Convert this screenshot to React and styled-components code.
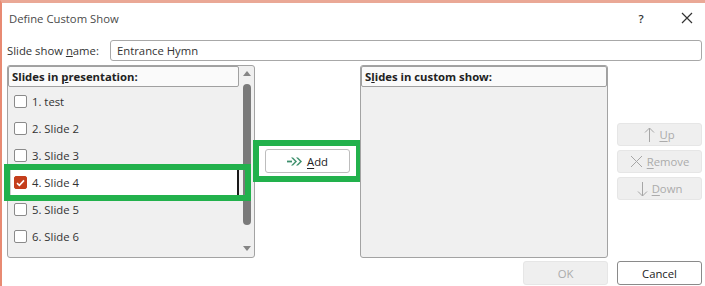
import styled, { createGlobalStyle } from "styled-components";

const GlobalStyle = createGlobalStyle`
  html, body {
    margin: 0;
    padding: 0;
    background: #ffffff;
  }
  body {
    font-family: "Open Sans", "Noto Sans", sans-serif;
    font-size: 11.3px;
    color: #333;
  }
`

const Dialog = styled.div`
  width: 705px;
  height: 286px;
  box-sizing: border-box;
  border-top: 3px solid #eaa896;
  border-left: 2px solid #e88a72;
  display: flex;
  flex-direction: column;
  overflow: hidden;
`

const TitleBar = styled.div`
  height: 30px;
  display: flex;
  align-items: center;
  padding-left: 7px;
  color: #4a4a4a;
`

const Title = styled.div`
  flex: 1;
`

const TitleIcon = styled.div`
  width: 20px;
  display: flex;
  justify-content: center;
  color: #333;
  font-weight: 600;
  margin-right: ${props => props.$gap}px;
`

const NameRow = styled.div`
  margin-top: 7px;
  height: 21px;
  display: flex;
  align-items: center;
  padding-left: 5px;
  padding-right: 3px;
`

const Label = styled.div`
  width: 103px;
  color: #333;
`

const NameInput = styled.div`
  flex: 1;
  height: 100%;
  box-sizing: border-box;
  border: 1px solid #a8a8a8;
  border-radius: 3px;
  display: flex;
  align-items: center;
  padding-left: 6px;
  color: #333;
`

const Main = styled.div`
  margin-top: 4px;
  height: 193px;
  display: flex;
  padding-left: 5px;
`

const ListBox = styled.div`
  position: relative;
  width: 248px;
  height: 100%;
  box-sizing: border-box;
  border: 1px solid #a3a3a3;
  border-radius: 3px;
  background: #f0f0f0;
  display: flex;
`

const ListContent = styled.div`
  flex: 1;
  display: flex;
  flex-direction: column;
  overflow: hidden;
`

const ListHeader = styled.div`
  height: 21px;
  box-sizing: border-box;
  border: 1px solid #a0a0a0;
  border-radius: 2px;
  background: #fafafa;
  display: flex;
  align-items: center;
  padding-left: 3px;
  font-weight: bold;
  color: #222;
  margin-right: ${props => props.$gap || 0}px;
`

const Items = styled.div`
  padding-top: 1px;
  display: flex;
  flex-direction: column;
`

const Item = styled.div`
  height: 27px;
  box-sizing: border-box;
  display: flex;
  align-items: center;
  gap: 5px;
  padding-left: 3px;
  margin: 0 1px 0 2px;
  color: #333;
  background: ${props => props.$selected ? "#ffffff" : "transparent"};
  border: 1px solid ${props => props.$selected ? "#d0d0d0" : "transparent"};
  border-right: ${props => props.$selected ? "2px solid #1a1a1a" : "1px solid transparent"};
`

const Check = styled.div`
  width: 13px;
  height: 13px;
  box-sizing: border-box;
  border-radius: 2px;
  border: 1px solid ${props => props.$checked ? "#c43e1c" : "#8a8a8a"};
  background: ${props => props.$checked ? "#c43e1c" : "#ffffff"};
  display: flex;
  align-items: center;
  justify-content: center;
`

const ScrollTrack = styled.div`
  width: 14px;
  display: flex;
  flex-direction: column;
  align-items: center;
  padding-top: 5px;
  padding-bottom: 6px;
`

const Arrow = styled.div`
  width: 0;
  height: 0;
  border-left: 4px solid transparent;
  border-right: 4px solid transparent;
  border-bottom: ${props => props.$down ? "none" : "5px solid #858585"};
  border-top: ${props => props.$down ? "5px solid #858585" : "none"};
`

const Thumb = styled.div`
  margin-top: 8px;
  width: 8px;
  height: 141px;
  border-radius: 4px;
  background: #7a7a7a;
`

const Spacer = styled.div`
  flex: 1;
`

const GreenFrame = styled.div`
  position: absolute;
  box-sizing: border-box;
  border: 6px solid #22b14c;
  pointer-events: none;
`

const Middle = styled.div`
  width: 105px;
  display: flex;
  justify-content: center;
  padding-top: 84px;
`

const AddWrap = styled.div`
  position: relative;
  height: 24px;
`

const Button = styled.div`
  width: 85px;
  height: ${props => props.$h || 23}px;
  box-sizing: border-box;
  border-radius: 3px;
  display: flex;
  align-items: center;
  justify-content: center;
  gap: 4px;
  color: ${props => props.$disabled ? "#ababab" : "#222"};
  background: ${props => props.$disabled ? "#efefef" : "#ffffff"};
  border: 1px solid ${props => props.$disabled ? "#e6e6e6" : props.$strong ? "#8a8a8a" : "#bdbdbd"};

  & u {
    text-underline-offset: 2px;
  }
`

const SideButtons = styled.div`
  margin-left: 9px;
  padding-top: 58px;
  display: flex;
  flex-direction: column;
  gap: 4px;
`

const Footer = styled.div`
  margin-top: 3px;
  display: flex;
  justify-content: flex-end;
  gap: 9px;
  padding-right: 3px;
`

const slides = ["1. test", "2. Slide 2", "3. Slide 3", "4. Slide 4", "5. Slide 5", "6. Slide 6"];

const CheckMark = () => (
  <svg width="9" height="8" viewBox="0 0 9 8">
    <path d="M1 4.2 L3.4 6.4 L8 1.4" fill="none" stroke="#fff" strokeWidth="1.6" />
  </svg>
);

const CloseIcon = () => (
  <svg width="12" height="12" viewBox="0 0 12 12">
    <path d="M1 1 L11 11 M11 1 L1 11" fill="none" stroke="#333" strokeWidth="1.2" />
  </svg>
);

const AddIcon = () => (
  <svg width="16" height="9" viewBox="0 0 16 9">
    <path d="M0 3.6 H5 V5.4 H0 Z" fill="#3d8f6c" />
    <path d="M4 0.5 L8 4.5 L4 8.5 L6 8.5 L10 4.5 L6 0.5 Z" fill="#3d8f6c" />
    <path d="M9 0.5 L13 4.5 L9 8.5 L11 8.5 L15 4.5 L11 0.5 Z" fill="#3d8f6c" />
  </svg>
);

const ArrowIcon = ({ down }) => (
  <svg width="11" height="16" viewBox="0 0 11 16">
    {down ? (
      <path d="M5.5 1 V15 M1 10.5 L5.5 15 L10 10.5" fill="none" stroke="#a6a6a6" strokeWidth="1" />
    ) : (
      <path d="M5.5 15 V1 M1 5.5 L5.5 1 L10 5.5" fill="none" stroke="#a6a6a6" strokeWidth="1" />
    )}
  </svg>
);

const CrossIcon = () => (
  <svg width="13" height="13" viewBox="0 0 13 13">
    <path d="M1 1 L12 12 M12 1 L1 12" fill="none" stroke="#a6a6a6" strokeWidth="1" />
  </svg>
);

const App = () => {
  return (
    <>
      <GlobalStyle />
      <Dialog>
        <TitleBar>
          <Title>Define Custom Show</Title>
          <TitleIcon $gap={26}>?</TitleIcon>
          <TitleIcon $gap={8}><CloseIcon /></TitleIcon>
        </TitleBar>

        <NameRow>
          <Label>Slide show <u>n</u>ame:</Label>
          <NameInput>Entrance Hymn</NameInput>
        </NameRow>

        <Main>
          <ListBox>
            <ListContent>
              <ListHeader $gap={1}><span>Slides in <u>p</u>resentation:</span></ListHeader>
              <Items>
                {slides.map((s, i) => (
                  <Item key={s} $selected={i === 3}>
                    <Check $checked={i === 3}>{i === 3 && <CheckMark />}</Check>
                    {s}
                  </Item>
                ))}
              </Items>
            </ListContent>
            <ScrollTrack>
              <Arrow />
              <Thumb />
              <Spacer />
              <Arrow $down />
            </ScrollTrack>
            <GreenFrame style={{ left: -4, top: 98, width: 247, height: 37 }} />
          </ListBox>

          <Middle>
            <AddWrap>
              <Button $h={24}>
                <AddIcon />
                <span><u>A</u>dd</span>
              </Button>
              <GreenFrame style={{ left: -12, top: -9, width: 109, height: 42 }} />
            </AddWrap>
          </Middle>

          <ListBox>
            <ListContent>
              <ListHeader><span>S<u>l</u>ides in custom show:</span></ListHeader>
            </ListContent>
          </ListBox>

          <SideButtons>
            <Button $disabled><ArrowIcon /><span><u>U</u>p</span></Button>
            <Button $disabled><CrossIcon /><span><u>R</u>emove</span></Button>
            <Button $disabled><ArrowIcon down /><span><u>D</u>own</span></Button>
          </SideButtons>
        </Main>

        <Footer>
          <Button $disabled $h={24}>OK</Button>
          <Button $strong $h={24}>Cancel</Button>
        </Footer>
      </Dialog>
    </>
  );
};

export default App;
